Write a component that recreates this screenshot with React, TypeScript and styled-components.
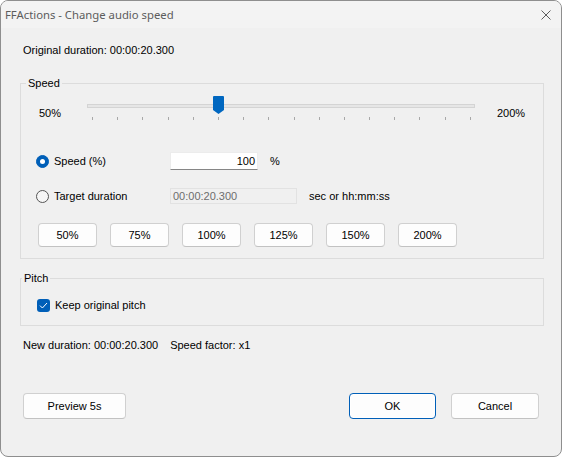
import React from "react";
import styled, { createGlobalStyle } from "styled-components";

const GlobalStyle = createGlobalStyle`
  html, body {
    margin: 0;
    padding: 0;
    background: #ffffff;
  }
  body {
    font-family: "Liberation Sans", Arial, sans-serif;
    font-size: 11px;
  }
`;

const Window = styled.div`
  width: 562px;
  height: 457px;
  box-sizing: border-box;
  border: 1px solid #8e8e8e;
  border-radius: 8px;
  overflow: hidden;
  background: #f0f0f0;
  display: flex;
  flex-direction: column;
  color: #000;
  font-family: "Liberation Sans", Arial, sans-serif;
  font-size: 11px;
  line-height: 13px;
`;

const TitleBar = styled.div`
  height: 27px;
  display: flex;
  align-items: center;
  padding: 0 10px 0 4px;
  background: #f3f3f3;
`;

const Title = styled.div`
  flex: 1;
  font-family: "Noto Sans", "Open Sans", sans-serif;
  font-size: 11.3px;
  color: #5c5c5c;
`;

const Content = styled.div`
  flex: 1;
  display: flex;
  flex-direction: column;
  padding: 0 17px 37px 19px;
`;

const InfoLine = styled.div<{ $top: number }>`
  display: flex;
  gap: 12px;
  margin-top: ${({ $top }) => $top}px;
  padding-left: 3px;
  height: 13px;
`;

const Group = styled.fieldset<{ $top: number; $bottom: number }>`
  margin: ${({ $top }) => $top}px 0 0 0;
  padding: 0 0 ${({ $bottom }) => $bottom}px 0;
  border: 1px solid #dcdcdc;
  min-width: 0;
`;

const Legend = styled.legend<{ $indent: number }>`
  margin-left: ${({ $indent }) => $indent}px;
  padding: 0 2px;
  line-height: 13px;
`;

const SliderRow = styled.div`
  display: flex;
  align-items: flex-start;
  height: 26px;
  margin-top: 6px;
  padding-left: 18px;
`;

const EndLabel = styled.div<{ $width: number }>`
  width: ${({ $width }) => $width}px;
  margin-top: 11px;
`;

const Slider = styled.div`
  position: relative;
  width: 388px;
  height: 26px;
  margin-right: 22px;
`;

const Track = styled.div`
  margin-top: 8px;
  height: 4px;
  box-sizing: border-box;
  border: 1px solid #d4d4d4;
  background: #e6e6e6;
`;

const Ticks = styled.div`
  display: flex;
  justify-content: space-between;
  margin-top: 9px;
  padding: 0 4px 0 5px;
`;

const Tick = styled.span`
  width: 1px;
  height: 3px;
  background: #a8a8a8;
`;

const Thumb = styled.svg`
  position: absolute;
  top: 0;
`;

const OptionRow = styled.div<{ $top: number }>`
  display: flex;
  align-items: center;
  height: 20px;
  margin-top: ${({ $top }) => $top}px;
  padding-left: 15px;
`;

const RadioLabel = styled.label`
  width: 134px;
  display: flex;
  align-items: center;
  gap: 5px;
`;

const Radio = styled.span<{ $checked: boolean }>`
  width: 13px;
  height: 13px;
  box-sizing: border-box;
  border-radius: 50%;
  display: flex;
  align-items: center;
  justify-content: center;
  background: ${({ $checked }) => ($checked ? "#005fb8" : "#f6f6f6")};
  border: 1px solid ${({ $checked }) => ($checked ? "#005fb8" : "#555555")};

  &::after {
    content: "";
    display: ${({ $checked }) => ($checked ? "block" : "none")};
    width: 5px;
    height: 5px;
    border-radius: 50%;
    background: #ffffff;
  }
`;

const TextBox = styled.div<{ $width: number; $disabled?: boolean }>`
  width: ${({ $width }) => $width}px;
  height: ${({ $disabled }) => ($disabled ? 16 : 18)}px;
  box-sizing: border-box;
  display: flex;
  align-items: center;
  justify-content: ${({ $disabled }) => ($disabled ? "flex-start" : "flex-end")};
  padding: 0 2px;
  background: ${({ $disabled }) => ($disabled ? "#f0f0f0" : "#ffffff")};
  color: ${({ $disabled }) => ($disabled ? "#6d6d6d" : "#000000")};
  border: 1px solid ${({ $disabled }) => ($disabled ? "#e2e2e2" : "#ececec")};
  border-bottom-color: ${({ $disabled }) => ($disabled ? "#e2e2e2" : "#868686")};
`;

const Unit = styled.span`
  margin-left: 12px;
`;

const PresetRow = styled.div`
  display: flex;
  gap: 13px;
  margin-top: 17px;
  padding-left: 17px;
`;

const Button = styled.button<{ $width: number; $height: number; $default?: boolean }>`
  width: ${({ $width }) => $width}px;
  height: ${({ $height }) => $height}px;
  box-sizing: border-box;
  padding: 0;
  font: inherit;
  color: #000;
  background: #fdfdfd;
  border: 1px solid ${({ $default }) => ($default ? "#005fb8" : "#d0d0d0")};
  border-bottom-color: ${({ $default }) => ($default ? "#005fb8" : "#c2c2c2")};
  box-shadow: ${({ $default }) => ($default ? "inset 0 0 0 1px #ffffff" : "none")};
  border-radius: 4px;
`;

const CheckRow = styled.label`
  display: flex;
  align-items: center;
  gap: 5px;
  height: 16px;
  margin-top: 12px;
  padding-left: 16px;
`;

const CheckBox = styled.span`
  width: 13px;
  height: 13px;
  border-radius: 3px;
  background: #005fb8;
  display: flex;
  align-items: center;
  justify-content: center;
`;

const Footer = styled.div`
  margin-top: auto;
  display: flex;
  align-items: center;
  padding: 0 5px 0 3px;
`;

const Spacer = styled.div`
  flex: 1;
`;

const FooterGap = styled.div`
  width: 15px;
`;

const MIN = 50;
const MAX = 200;
const value = 100;
const presets = ["50%", "75%", "100%", "125%", "150%", "200%"];

export default function App() {
  const thumbLeft = Math.round(5 + ((value - MIN) / (MAX - MIN)) * 378 - 5.5);

  return (
    <>
      <GlobalStyle />
      <Window>
        <TitleBar>
          <Title>FFActions - Change audio speed</Title>
          <svg width="10" height="10" viewBox="0 0 10 10">
            <path d="M0.5 0.5 L9.5 9.5 M9.5 0.5 L0.5 9.5" stroke="#5c5c5c" strokeWidth="1" />
          </svg>
        </TitleBar>
        <Content>
          <InfoLine $top={16}>Original duration: 00:00:20.300</InfoLine>

          <Group $top={20} $bottom={11}>
            <Legend $indent={5}>Speed</Legend>
            <SliderRow>
              <EndLabel $width={48}>50%</EndLabel>
              <Slider>
                <Track />
                <Ticks>
                  {Array.from({ length: 16 }, (_, i) => (
                    <Tick key={i} />
                  ))}
                </Ticks>
                <Thumb width="11" height="18" viewBox="0 0 11 18" style={{ left: thumbLeft }}>
                  <path d="M0 1 Q0 0 1 0 H10 Q11 0 11 1 V14 L5.5 18 L0 14 Z" fill="#0067c0" />
                </Thumb>
              </Slider>
              <EndLabel $width={30}>200%</EndLabel>
            </SliderRow>

            <OptionRow $top={29}>
              <RadioLabel>
                <Radio $checked />
                Speed (%)
              </RadioLabel>
              <TextBox $width={88}>100</TextBox>
              <Unit>%</Unit>
            </OptionRow>

            <OptionRow $top={15}>
              <RadioLabel>
                <Radio $checked={false} />
                Target duration
              </RadioLabel>
              <TextBox $width={127} $disabled>
                00:00:20.300
              </TextBox>
              <Unit>sec or hh:mm:ss</Unit>
            </OptionRow>

            <PresetRow>
              {presets.map(p => (
                <Button key={p} $width={59} $height={24}>
                  {p}
                </Button>
              ))}
            </PresetRow>
          </Group>

          <Group $top={13} $bottom={12}>
            <Legend $indent={1}>Pitch</Legend>
            <CheckRow>
              <CheckBox>
                <svg width="9" height="7" viewBox="0 0 9 7">
                  <path d="M1 3.6 L3.4 6 L8 1" stroke="#ffffff" strokeWidth="1" fill="none" />
                </svg>
              </CheckBox>
              Keep original pitch
            </CheckRow>
          </Group>

          <InfoLine $top={13}>
            <span>New duration: 00:00:20.300</span>
            <span>Speed factor: x1</span>
          </InfoLine>

          <Footer>
            <Button $width={103} $height={26}>
              Preview 5s
            </Button>
            <Spacer />
            <Button $width={87} $height={26} $default>
              OK
            </Button>
            <FooterGap />
            <Button $width={88} $height={26}>
              Cancel
            </Button>
          </Footer>
        </Content>
      </Window>
    </>
  );
}
